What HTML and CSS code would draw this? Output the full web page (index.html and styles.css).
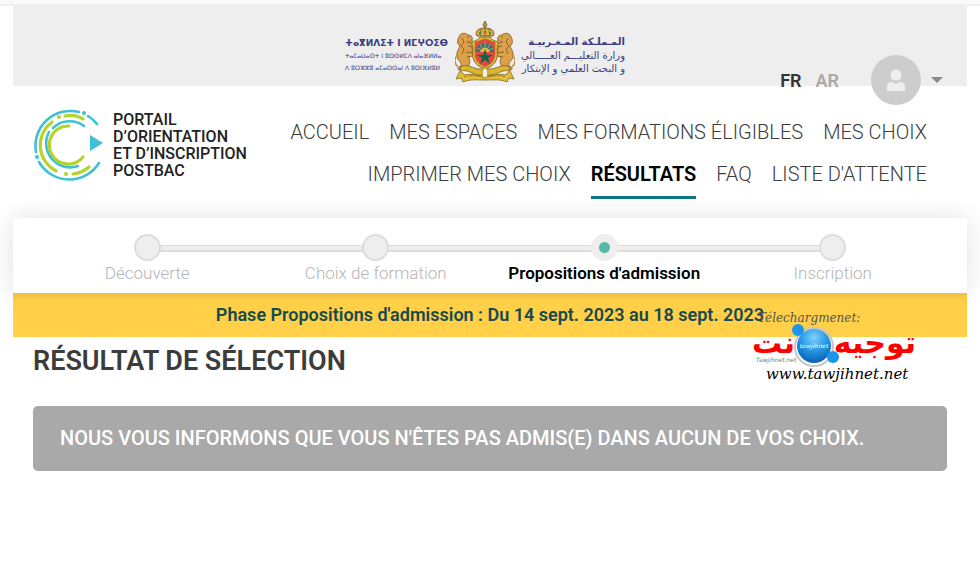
FILE: index.html
```
<!DOCTYPE html>
<html lang="fr">
<head>
    <meta charset="UTF-8">
    <meta name="viewport" content="width=device-width, initial-scale=1.0">
    <title>Portail d'orientation et d'inscription postbac</title>
    <link rel="stylesheet" href="styles.css">
</head>
<body>
    <div class="page">
        <header class="top-bar">
            <div class="ministry">
                <div class="ministry-text tifinagh">
                    <strong>ⵜⴰⴳⵍⴷⵉⵜ ⵏ ⵍⵎⵖⵔⵉⴱ</strong>
                    <span>ⵜⴰⵎⴰⵡⴰⵙⵜ ⵏ ⵓⵙⵙⵍⵎⴷ ⴰⵏⴰⴼⵍⵍⴰ</span>
                    <span>ⴷ ⵓⵔⵣⵣⵓ ⴰⵎⴰⵙⵙⴰⵏ ⴷ ⵓⵙⵏⴼⵍⵓⵍ</span>
                </div>
                <svg class="emblem" viewBox="0 0 60 64" aria-hidden="true">
                    <!-- crown -->
                    <path d="M30 1l2 4-2 3-2-3z" fill="#c99a2e" stroke="#4a4022" stroke-width=".7"/>
                    <path d="M22 16c-3-5 2-8 8-8s11 3 8 8z" fill="#d9ae3c" stroke="#5c4a1c" stroke-width=".8"/>
                    <path d="M30 8v8M26 9l-1 7M34 9l1 7" stroke="#6d6a3a" stroke-width=".8"/>
                    <circle cx="25" cy="13" r="1" fill="#2e7a4a"/><circle cx="35" cy="13" r="1" fill="#2e7a4a"/><circle cx="30" cy="12" r="1" fill="#c0392b"/>
                    <!-- lions -->
                    <g id="lion" fill="#dc9f4a" stroke="#7a5525" stroke-width=".8">
                        <path d="M4 17c1-4 6-5 9-2 3 0 5 2 4 5l-4 2c3 3 5 6 4 10l-3 6c2 4 0 8-3 11l-7 1c-2-1-1-3 2-4 1-4-3-5-4-9-1-5 2-8 3-11-3-2-3-6-1-9z"/>
                        <path d="M12 22l6 1 1 4-6-1M11 32l7 1 1 3-7 1" />
                        <path d="M3 47c-3-3-4-7-2-10" fill="none" stroke="#c08a35" stroke-width="1.6"/>
                        <path d="M7 18l2 4-3 4 3 3-2 5M12 17h2" fill="none"/>
                    </g>
                    <use href="#lion" transform="matrix(-1 0 0 1 60 0)"/>
                    <!-- shield -->
                    <path d="M17 21c4 1 6-2 8-4h10c2 2 4 5 8 4 1 3-1 5-1 9 2 10-3 16-12 19-9-3-14-9-12-19 0-4-2-6-1-9z" fill="#e3bb35" stroke="#80651e"/>
                    <path d="M20 22c4 0 6-3 10-3s6 3 10 3v12c0 7-4 10-10 13-6-3-10-6-10-13z" fill="#e04b40" stroke="#a3762a" stroke-width=".6"/>
                    <path d="M21 32c0-12 18-12 18 0z" fill="#37727e"/>
                    <path d="M25 32c1-6 9-6 10 0z" fill="#e6b53a"/>
                    <path d="M30 22v5M25 24l2 4M35 24l-2 4M22 28l4 2M38 28l-4 2" stroke="#d9b04a" stroke-width=".8"/>
                    <path d="M30 29l2 6h6l-5 3 2 6-5-4-5 4 2-6-5-3h6z" fill="#17604c"/>
                    <!-- ribbon -->
                    <path d="M5 47c8-4 13 2 20 2h10c7 0 12-6 20-2l-1 4c-7-2-12 4-19 4H25c-7 0-12-6-19-4z" fill="#dcb52f" stroke="#7b621b" stroke-width=".8"/>
                    <path d="M5 51l-4 8 5-1 2 4c7-3 13-2 22-2s15-1 22 2l2-4 5 1-4-8-5 4c-6-2-12 1-20 1s-14-3-20-1z" fill="#e2bd36" stroke="#80651e" stroke-width=".8"/>
                    <path d="M9 57c8-3 14 0 21 0s13-3 21 0" fill="none" stroke="#80651e" stroke-width=".8" stroke-dasharray="2 1"/>
                    <ellipse cx="30" cy="53" rx="3" ry="5" fill="#eee" stroke="#c49b24" stroke-width="1.4"/>
                </svg>
                <div class="ministry-text arabic" lang="ar" dir="rtl">
                    <strong>المـملـكة المـغـربيـة</strong>
                    <span>وزارة التعليـــم العـــــالي</span>
                    <span>و البحث العلمي و الإبتكار</span>
                </div>
            </div>
            <div class="user-bar">
                <a class="lang active" href="#">FR</a>
                <a class="lang" href="#">AR</a>
                <button class="user-menu" type="button" aria-label="Mon compte">
                    <span class="avatar">
                        <svg width="20" height="24" viewBox="0 0 20 24" aria-hidden="true">
                            <circle cx="10" cy="7" r="5.5" fill="#eee"/>
                            <path d="M1 22v-3c0-4 2-5 5-5 2 2 6 2 8 0 3 0 5 1 5 5v3q0 1-1 1H2q-1 0-1-1z" fill="#eee"/>
                        </svg>
                    </span>
                    <span class="caret"></span>
                </button>
            </div>
        </header>

        <div class="main-header">
            <a class="logo" href="#">
                <svg width="70" height="74" viewBox="0 0 70 74" fill="none" stroke-width="2.6" stroke-linecap="round" aria-hidden="true">
                    <g stroke="#3fc0d6">
                        <path d="M46 4A35 35 0 0 0 3 44"/>
                        <path d="M55 8Q60 11 64 16"/>
                        <path d="M6 54A35 35 0 0 0 66 55"/>
                        <path d="M51 18A24 24 0 0 0 20 20"/>
                        <path d="M16 24A24 24 0 0 0 45 58"/>
                    </g>
                    <g stroke="#b4d42a" stroke-width="3.2">
                        <path d="M19 14A29 29 0 0 0 23 63"/>
                        <path d="M32 8Q42 6 50 11"/>
                        <path d="M40 66Q49 65 56 59"/>
                        <path d="M36 18A19 19 0 1 0 50 49"/>
                    </g>
                    <path d="M70 35L57 27V43z" fill="#3fc0d6"/>
                    <g fill="#3fc0d6"><circle cx="51" cy="5" r="2"/><circle cx="4" cy="49" r="2"/></g>
                    <g fill="#b4d42a"><circle cx="26" cy="9" r="2"/><circle cx="33" cy="66" r="2"/></g>
                </svg>
                <span>PORTAIL<br>D’ORIENTATION<br>ET D’INSCRIPTION<br>POSTBAC</span>
            </a>
            <nav class="menu">
                <a href="#">ACCUEIL</a>
                <a href="#">MES ESPACES</a>
                <a href="#">MES FORMATIONS ÉLIGIBLES</a>
                <a href="#">MES CHOIX</a>
                <a href="#">IMPRIMER MES CHOIX</a>
                <a class="active" href="#">RÉSULTATS</a>
                <a href="#">FAQ</a>
                <a href="#">LISTE D'ATTENTE</a>
            </nav>
        </div>

        <ol class="steps">
            <li>Découverte</li>
            <li>Choix de formation</li>
            <li class="current">Propositions d'admission</li>
            <li>Inscription</li>
        </ol>

        <div class="phase">
            Phase Propositions d'admission : Du 14 sept. 2023 au 18 sept. 2023
            <svg class="tawjihnet" width="164" height="76" viewBox="0 0 164 76">
                <defs>
                    <radialGradient id="ball" cx="50%" cy="25%" r="75%">
                        <stop offset="0" stop-color="#7fd0f8"/>
                        <stop offset=".5" stop-color="#2a9be6"/>
                        <stop offset="1" stop-color="#0a5db4"/>
                    </radialGradient>
                </defs>
                <text class="tw-label" x="6" y="13">Télechargmenet:</text>
                <text class="tw-name" x="164" y="44" direction="rtl">توجيه</text>
                <text class="tw-name" x="43" y="44" direction="rtl">نت</text>
                <circle cx="62" cy="38" r="19" fill="none" stroke="#c4c8cc" stroke-width="2"/>
                <circle cx="62" cy="37" r="17" fill="url(#ball)"/>
                <circle cx="46" cy="21" r="6" fill="#1b96ea"/>
                <circle cx="81" cy="48" r="6" fill="#1b96ea"/>
                <text class="tw-ball" x="62" y="39">tawjihnet</text>
                <text class="tw-small" x="4" y="53">Tawjihnet.net</text>
                <text class="tw-url" x="14" y="70">www.tawjihnet.net</text>
            </svg>
        </div>

        <main class="content">
            <h1>RÉSULTAT DE SÉLECTION</h1>
            <p class="message">NOUS VOUS INFORMONS QUE VOUS N'ÊTES PAS ADMIS(E) DANS AUCUN DE VOS CHOIX.</p>
        </main>
    </div>
</body>
</html>
```

FILE: styles.css
```
*,
*::before,
*::after {
    margin: 0;
    padding: 0;
    box-sizing: border-box;
}

body {
    background-color: #fff;
    color: #3c3c3c;
    font-family: Roboto, "DejaVu Sans", sans-serif;
}

body::before {
    content: "";
    display: block;
    height: 6px;
    border-bottom: 2px solid #f0f0f0;
    background-color: #f9f9f9;
}

a {
    color: inherit;
    text-decoration: none;
}

.page {
    margin: 0 13px;
}

.top-bar {
    position: relative;
    height: 80px;
    background-color: #eee;
}

.ministry {
    display: flex;
    justify-content: center;
    align-items: center;
    gap: 10px;
    padding: 14px 10px 0 0;
}

.ministry-text {
    display: flex;
    flex-direction: column;
    width: 100px;
    padding-top: 6px;
    color: #3a3d80;
    font-family: "DejaVu Sans", sans-serif;
    white-space: nowrap;
}

.tifinagh strong {
    font-size: 9px;
    line-height: 14px;
}

.tifinagh span {
    font-size: 6px;
    line-height: 12px;
}

.arabic strong {
    font-size: 10px;
    line-height: 14px;
}

.arabic span {
    font-size: 10px;
    line-height: 13px;
}

.emblem {
    width: 60px;
    height: 64px;
}

/* sits across the bottom edge of the grey bar */
.user-bar {
    position: absolute;
    right: 24px;
    bottom: -19px;
    display: flex;
    align-items: center;
}

.lang {
    margin-right: 14px;
    color: #aaa;
    font-size: 18px;
    font-weight: 600;
}

.lang.active {
    color: #333;
}

.user-menu {
    display: flex;
    align-items: center;
    gap: 10px;
    margin-left: 18px;
    border: none;
    background: none;
    cursor: pointer;
}

.avatar {
    display: flex;
    align-items: center;
    justify-content: center;
    width: 50px;
    height: 50px;
    border-radius: 50%;
    background-color: #cdcdcd;
}

.caret {
    border: 6px solid transparent;
    border-top-color: #888;
    border-bottom: none;
}

.main-header {
    display: flex;
    justify-content: space-between;
    padding: 22px 40px 19px 20px;
}

.logo {
    display: flex;
    align-items: center;
    gap: 10px;
    height: 74px;
    flex-shrink: 0;
    color: #222;
    font-size: 16px;
    line-height: 17px;
    font-weight: 500;
}

.menu {
    display: flex;
    flex-wrap: wrap;
    justify-content: flex-end;
    gap: 3px 20px;
    padding-top: 10px;
    font-size: 20px;
    font-weight: 300;
    line-height: 28px;
}

.menu a {
    padding-bottom: 8px;
    border-bottom: 3px solid transparent;
}

.menu .active {
    border-bottom-color: #0f7482;
    color: #000;
    font-weight: 600;
}

.steps {
    display: grid;
    grid-template-columns: repeat(4, 1fr);
    padding: 16px 20px 8px;
    box-shadow: 0 0 25px rgba(0, 0, 0, 0.12);
    list-style: none;
}

.steps li {
    position: relative;
    color: #b5b5b5;
    font-size: 17px;
    font-weight: 300;
    line-height: 24px;
    text-align: center;
}

.steps li::before {
    content: "";
    position: relative;
    z-index: 1;
    display: block;
    width: 27px;
    height: 27px;
    margin: 0 auto;
    border: 2px solid #dcdcdc;
    border-radius: 50%;
    background-color: #eee;
}

.steps li:not(:last-child)::after {
    content: "";
    position: absolute;
    top: 11px;
    left: 50%;
    width: 100%;
    height: 7px;
    border: 1px solid #dcdcdc;
    border-bottom-width: 2px;
    background-color: #eee;
}

.steps .current {
    color: #000;
    font-weight: 600;
}

.steps .current::before {
    border: 8px solid #eee;
    background-color: #55b8a9;
}

.phase {
    position: relative;
    padding: 10px;
    background-color: #ffd048;
    box-shadow: inset 0 12px 14px -12px rgba(0, 0, 0, 0.14);
    color: #164a50;
    font-size: 18px;
    font-weight: 600;
    line-height: 24px;
    text-align: center;
}

.tawjihnet {
    position: absolute;
    top: 16px;
    right: 51px;
}

.tawjihnet text {
    font-family: "DejaVu Serif", serif;
    font-style: italic;
    font-weight: 400;
}

.tawjihnet .tw-label {
    fill: #555;
    font-size: 12px;
}

.tawjihnet .tw-name {
    fill: #f00;
    font-family: "DejaVu Sans", sans-serif;
    font-size: 30px;
    font-style: normal;
    font-weight: 700;
}

.tawjihnet .tw-ball {
    fill: #fff;
    font-size: 6px;
    text-anchor: middle;
}

.tawjihnet .tw-small {
    fill: #777;
    font-family: "DejaVu Sans", sans-serif;
    font-size: 6px;
}

.tawjihnet .tw-url {
    fill: #000;
    font-size: 15px;
}

.content {
    padding: 8px 20px 24px;
}

.content h1 {
    font-size: 27px;
    font-weight: 600;
    line-height: 32px;
}

.message {
    margin-top: 29px;
    padding: 18px 27px;
    border-radius: 5px;
    background-color: #a9a9a9;
    color: #fff;
    font-size: 20px;
    font-weight: 500;
    line-height: 29px;
}
```
